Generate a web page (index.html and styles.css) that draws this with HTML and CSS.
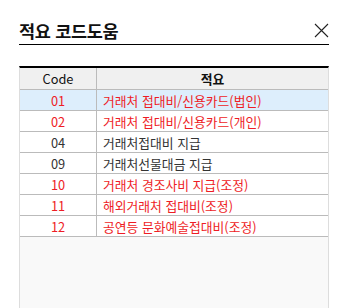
FILE: index.html
```html
<!DOCTYPE html>
<html lang="ko">
<head>
    <meta charset="UTF-8">
    <title>적요 코드도움</title>
    <link rel="stylesheet" href="styles.css">
</head>
<body>
    <div class="dialog">
        <div class="title-bar">
            <h1>적요 코드도움</h1>
            <button class="close" type="button" aria-label="닫기">
                <svg width="15" height="15" viewBox="0 0 15 15"><path d="M1 1 L14 14 M14 1 L1 14" stroke="#222" stroke-width="1.1" fill="none"/></svg>
            </button>
        </div>
        <div class="grid">
            <table>
                <thead>
                    <tr>
                        <th class="col-code">Code</th>
                        <th class="col-name">적요</th>
                    </tr>
                </thead>
                <tbody>
                    <tr class="selected red"><td>01</td><td>거래처 접대비/신용카드(법인)</td></tr>
                    <tr class="red"><td>02</td><td>거래처 접대비/신용카드(개인)</td></tr>
                    <tr><td>04</td><td>거래처접대비 지급</td></tr>
                    <tr><td>09</td><td>거래처선물대금 지급</td></tr>
                    <tr class="red"><td>10</td><td>거래처 경조사비 지급(조정)</td></tr>
                    <tr class="red"><td>11</td><td>해외거래처 접대비(조정)</td></tr>
                    <tr class="red"><td>12</td><td>공연등 문화예술접대비(조정)</td></tr>
                </tbody>
            </table>
        </div>
    </div>
</body>
</html>
```
FILE: styles.css
```css
body {
    margin: 0;
    background: #fff;
    font-family: "Noto Sans CJK KR", "Noto Sans", sans-serif;
    color: #222;
    overflow: hidden;
}
.dialog {
    padding: 16px 21px 0 19px;
}

/* Title */
.title-bar {
    display: flex;
    justify-content: space-between;
    align-items: center;
    height: 28px;
    border-bottom: 1px solid #000;
}
.title-bar h1 {
    margin: 0;
    font-size: 17.5px;
    font-weight: bold;
    color: #111;
    letter-spacing: -0.3px;
}
.close {
    border: none;
    background: none;
    padding: 0;
    width: 15px;
    height: 15px;
    cursor: pointer;
}

/* Grid */
.grid {
    margin-top: 21px;
    height: 240px;
    border-top: 2px solid #000;
    border-left: 1px solid #ddd;
    border-right: 1px solid #ddd;
    background: #f9f9f9;
}
table {
    width: 100%;
    border-collapse: collapse;
    font-size: 12.8px;
}
th, td {
    padding: 0 6px;
    border-bottom: 1px solid #bbb;
    white-space: nowrap;
}
th {
    height: 21px;
    background: #f0f0f0;
    font-weight: normal;
    color: #111;
}
th.col-name {
    font-weight: bold;
}
th.col-code, td:first-child {
    width: 64px;
    text-align: center;
    border-right: 1px solid #bbb;
}
td {
    height: 20px;
    background: #fff;
    color: #333;
}
tr.selected td {
    background: #ddeefc;
}
tr.red td {
    color: #ee1c25;
}
```
